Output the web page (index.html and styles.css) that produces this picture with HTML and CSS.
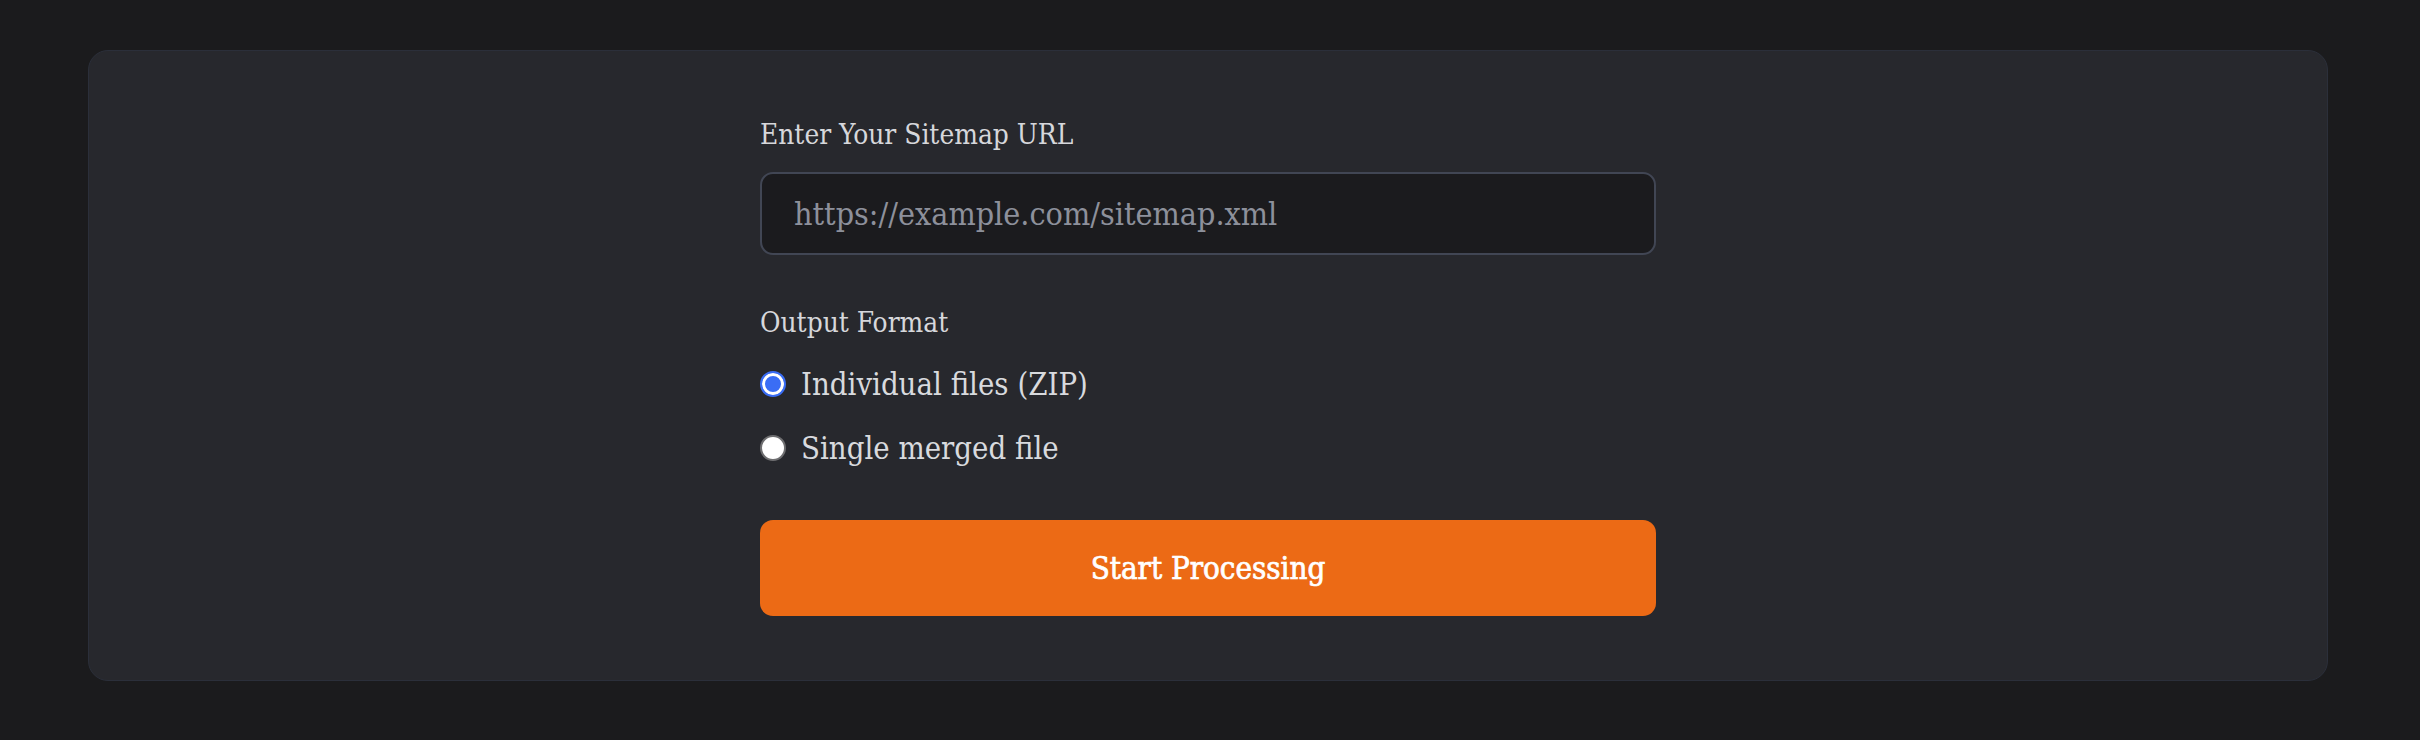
FILE: index.html
```html
<!DOCTYPE html>
<html lang="en">
<head>
<meta charset="utf-8">
<title>Sitemap Processor</title>
<link rel="stylesheet" href="styles.css">
</head>
<body>
<main class="page">
  <section class="card">
    <form class="form">
      <label class="field-label" for="url">Enter Your Sitemap URL</label>
      <input class="url-input" id="url" type="text" placeholder="https://example.com/sitemap.xml">
      <div class="field-label format-label">Output Format</div>
      <div class="options">
        <label class="option"><input class="radio" type="radio" name="fmt" checked><span>Individual files (ZIP)</span></label>
        <label class="option"><input class="radio" type="radio" name="fmt"><span>Single merged file</span></label>
      </div>
      <button class="submit" type="button">Start Processing</button>
    </form>
  </section>
</main>
</body>
</html>
```
FILE: styles.css
```css
* { box-sizing: border-box; }
html, body { margin: 0; padding: 0; }
body {
  background: #1b1b1d;
  font-family: "DejaVu Serif", "Liberation Serif", serif;
  font-stretch: condensed;
  width: 2420px;
  height: 740px;
  overflow: hidden;
}
.page { padding: 50px 0 0 88px; }
.card {
  width: 2240px;
  background: #27282d;
  border: 1px solid #2b2f3a;
  border-radius: 20px;
  padding: 64px 0;
}
.form {
  width: 896px;
  margin: 0 auto;
  display: flex;
  flex-direction: column;
}
.field-label {
  font-size: 27.8px;
  line-height: 40px;
  color: #d6d7db;
  margin-bottom: 17px;
}
.url-input {
  height: 83px;
  width: 100%;
  background: #1b1b1e;
  border: 2px solid #414654;
  border-radius: 13px;
  padding: 0 32px;
  font: inherit;
  font-size: 32px;
  color: #e5e7eb;
  outline: none;
}
.url-input::placeholder { color: #8d909b; }
.format-label { margin-top: 48px; margin-bottom: 17px; }
.options { display: flex; flex-direction: column; gap: 16px; }
.option {
  display: flex;
  align-items: center;
  gap: 15px;
  height: 48px;
  font-size: 30.8px;
  color: #d8dade;
}
.radio {
  appearance: none;
  margin: 0;
  width: 26px;
  height: 26px;
  border-radius: 50%;
  background: #fff;
  border: 2px solid #6e6e70;
}
.radio:checked {
  border: 2.5px solid #3a6df5;
  background: #3a6df5;
  box-shadow: inset 0 0 0 3px #fff;
}
.submit {
  margin-top: 48px;
  height: 96px;
  border: none;
  border-radius: 13px;
  background: #ec6a15;
  color: #fff;
  font: inherit;
  font-size: 31px;
  font-weight: 400;
  -webkit-text-stroke: 0.7px #fff;
}
```
